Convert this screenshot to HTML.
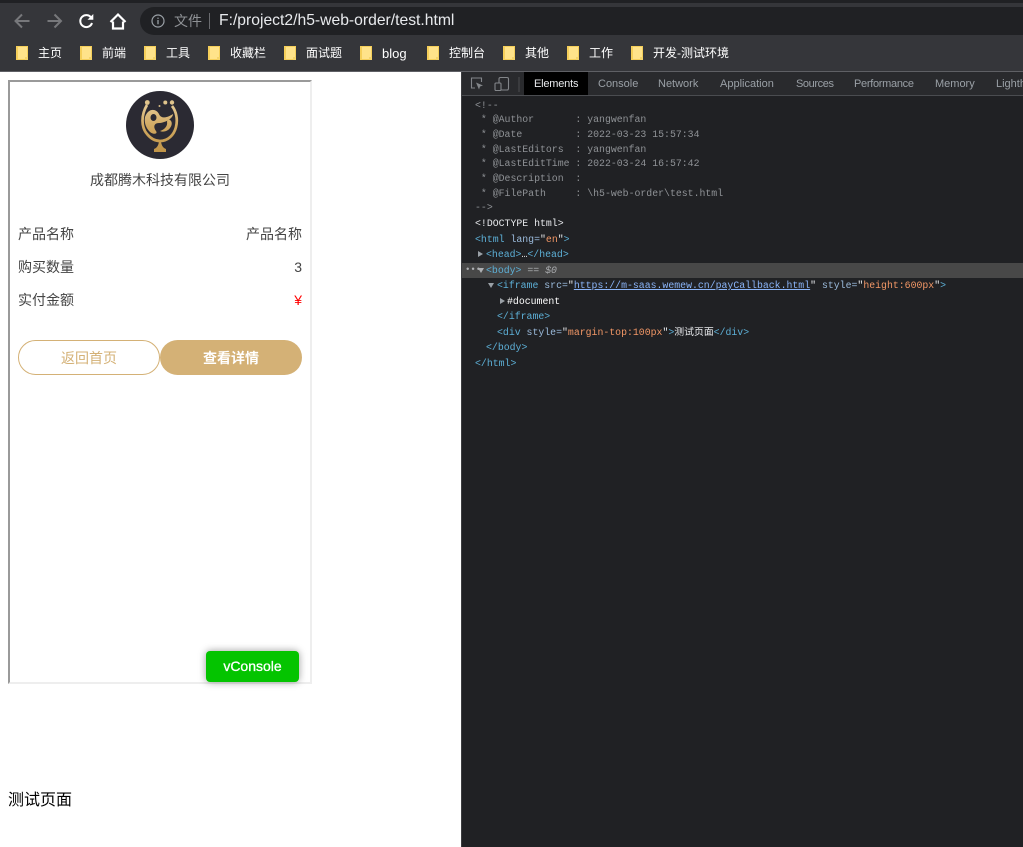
<!DOCTYPE html>
<html lang="zh"><head><meta charset="utf-8"><title>test</title>
<style>
html,body{margin:0;padding:0;width:1023px;height:847px;overflow:hidden;background:#fff;font-family:"Liberation Sans","Noto Sans CJK SC",sans-serif}
div,span,svg{position:absolute;white-space:pre}
span.c,b{position:static}
.bm{top:45px;color:#fff;font-size:12px;line-height:16px}
.f{top:46px;width:12px;height:14px;background:#ffe38a;border:1px solid #f5cf5a;border-left-width:2px;box-sizing:border-box}
.f:after{content:"";position:absolute;right:-1px;bottom:-1px;width:3px;height:3px;background:#f5d469}
.tab{top:73px;height:24px;line-height:23px;font-size:11px;color:#9aa0a6}
.l{left:0;height:15px;line-height:15px;font-family:"Liberation Mono","Noto Sans CJK SC",monospace;font-size:9.85px;color:#9aa0a6}
.g{color:#8f9296}
.t{color:#5db0d7}.a{color:#9bbbdc}.v{color:#f29766}.w{color:#e8eaed}
.row{font-size:14px;color:#444;line-height:18px;height:18px}
</style></head><body>
<!-- browser chrome -->
<div style="left:0;top:0;width:1023px;height:72px;background:#35363a"></div>
<div style="left:0;top:0;width:1023px;height:3px;background:#202124"></div>
<div style="left:140px;top:7px;width:883px;height:28px;background:#202124;border-radius:14px 0 0 14px"></div>
<div style="left:0;top:71px;width:1023px;height:1px;background:#5f6065"></div>
<svg style="left:12px;top:11px" width="116" height="20" viewBox="0 0 116 20" fill="none">
<path d="M17.500 10H4M10 3.500L3.500 10l6.500 6.500" stroke="#77787b" stroke-width="2"/>
<path d="M35.500 10h13.500M42.500 3.500l6.500 6.500-6.500 6.500" stroke="#77787b" stroke-width="2"/>
<path d="M79.300 6.800A6 6 0 1 0 80 12" stroke="#fff" stroke-width="2"/>
<path d="M75.500 8.700h5.800V3z" fill="#fff"/>
<path d="M101 10.500V17.500h10V10.500M98.500 11L106 3.500 113.500 11" stroke="#fff" stroke-width="2.200"/>
</svg>
<svg style="left:151px;top:14px" width="14" height="14" viewBox="0 0 14 14" fill="none"><circle cx="7" cy="7" r="6" stroke="#9aa0a6" stroke-width="1.200"/><path d="M7 6v4.200M7 3.600v1.300" stroke="#9aa0a6" stroke-width="1.300"/></svg>
<div style="left:174px;top:12px;font-size:14px;line-height:18px;color:#8f9296">文件</div>
<div style="left:209px;top:13px;width:1px;height:16px;background:#6a6b6f"></div>
<div style="left:219px;top:11px;font-size:15.700px;line-height:20px;color:#e8eaed">F:/project2/h5-web-order/test.html</div>
<!-- bookmarks -->
<div class="f" style="left:16px"></div><div class="bm" style="left:38px">主页</div>
<div class="f" style="left:80px"></div><div class="bm" style="left:102px">前端</div>
<div class="f" style="left:144px"></div><div class="bm" style="left:166px">工具</div>
<div class="f" style="left:208px"></div><div class="bm" style="left:230px">收藏栏</div>
<div class="f" style="left:284px"></div><div class="bm" style="left:306px">面试题</div>
<div class="f" style="left:360px"></div><div class="bm" style="left:382px;font-size:13px;top:46px">blog</div>
<div class="f" style="left:427px"></div><div class="bm" style="left:449px">控制台</div>
<div class="f" style="left:503px"></div><div class="bm" style="left:525px">其他</div>
<div class="f" style="left:567px"></div><div class="bm" style="left:589px">工作</div>
<div class="f" style="left:631px"></div><div class="bm" style="left:653px">开发-测试环境</div>
<!-- iframe -->
<div style="left:8px;top:80px;width:304px;height:604px;box-sizing:border-box;border:2px solid;border-color:#9a9a9a #eeeeee #eeeeee #9a9a9a;background:#fff"></div>
<svg style="left:126px;top:91px" width="68" height="68" viewBox="0 0 68 68" fill="none">
<defs><linearGradient id="gd" x1="0" y1="0" x2="0" y2="1"><stop offset="0" stop-color="#f0d9a6"/><stop offset="1" stop-color="#b8893f"/></linearGradient>
<linearGradient id="gu" gradientUnits="userSpaceOnUse" x1="0" y1="10" x2="0" y2="62"><stop offset="0" stop-color="#e8cf9c"/><stop offset=".5" stop-color="#d0a860"/><stop offset="1" stop-color="#c09448"/></linearGradient></defs>
<circle cx="34" cy="34" r="34" fill="#2b2a33"/>
<path d="M21 14C15 24 15 36 21 43C25 48 30 50 34 50C42 50 48 44 50 36C52 28 50 20 46 15" stroke="url(#gu)" stroke-width="2.700"/>
<path d="M19 26C22 17 30 17 33 23C35 28 41 27 47 23C47 28 38 32 33 32C28 32 27 36 30 40C32 43 28 44 24 41C20 37 18 32 19 26z" fill="url(#gu)"/>
<ellipse cx="27.500" cy="26.500" rx="3" ry="3.500" fill="#2b2a33"/>
<path d="M44 29C47 31 46 36 42 39C39 41 36 41 34 40C38 39 42 35 41 31C41 29 43 28 44 29z" fill="url(#gu)"/>
<path d="M33 49h2C35 54 37 57 40 58V61H28V58C31 57 33 54 33 49z" fill="url(#gu)"/>
<circle cx="21.300" cy="11.500" r="2.400" fill="#e0c48c"/><circle cx="39.300" cy="11.500" r="2" fill="#e0c48c"/><circle cx="46" cy="11.500" r="2.200" fill="#e0c48c"/><circle cx="33.500" cy="15" r="1" fill="#d8bc84"/>
</svg>
<div style="left:90px;top:171px;font-size:14px;line-height:18px;color:#444">成都腾木科技有限公司</div>
<div class="row" style="left:18px;top:225px">产品名称</div>
<div class="row" style="right:721px;top:225px">产品名称</div>
<div class="row" style="left:18px;top:258px">购买数量</div>
<div class="row" style="right:721px;top:258px">3</div>
<div class="row" style="left:18px;top:291px">实付金额</div>
<div class="row" style="right:721px;top:291px;color:#f00">¥</div>
<div style="left:18px;top:340px;width:142px;height:35px;box-sizing:border-box;border:1px solid #d4b176;border-radius:18px;text-align:center;line-height:35px;font-size:14px;color:#d4b176">返回首页</div>
<div style="left:160px;top:340px;width:142px;height:35px;background:#d4b176;border-radius:18px;text-align:center;line-height:37px;font-size:14px;font-weight:bold;color:#fff">查看详情</div>
<div style="left:206px;top:651px;width:93px;height:31px;background:#04c400;border-radius:4px;box-shadow:0 0 8px rgba(0,0,0,.4);text-align:center;line-height:31px;font-size:14px;color:#fff;-webkit-text-stroke:.3px #fff">vConsole</div>
<div style="left:8px;top:790px;font-size:16px;line-height:21px;color:#000">测试页面</div>
<!-- devtools -->
<div style="left:461px;top:72px;width:562px;height:775px;background:#202124;border-left:1px solid #3c3d40;box-sizing:border-box"></div>
<div style="left:462px;top:72px;width:561px;height:23px;background:#292a2d"></div>
<div style="left:462px;top:95px;width:561px;height:1px;background:#4a4c50"></div>
<svg style="left:470px;top:76px" width="50" height="17" viewBox="0 0 50 17" fill="none">
<path d="M5 12H1.500V2h10v4" stroke="#83868a" stroke-width="1.100"/><path d="M6 6.500l7 3-3 1-1 3z" fill="#83868a"/>
<rect x="29" y="1.500" width="9.500" height="12.500" rx="1.500" stroke="#83868a" stroke-width="1.100"/><rect x="25" y="7" width="6" height="7.500" rx="1" fill="#292a2d" stroke="#83868a" stroke-width="1.100"/>
<path d="M49 1v15" stroke="#4a4c50"/>
</svg>
<div style="left:524px;top:72px;width:64px;height:23px;background:#000"></div>
<div class="tab" style="left:534px;color:#e8eaed;letter-spacing:-.2px">Elements</div>
<div class="tab" style="left:598px">Console</div>
<div class="tab" style="left:658px">Network</div>
<div class="tab" style="left:720px">Application</div>
<div class="tab" style="left:796px;letter-spacing:-.4px">Sources</div>
<div class="tab" style="left:854px;letter-spacing:-.3px">Performance</div>
<div class="tab" style="left:935px">Memory</div>
<div class="tab" style="left:996px">Lighthouse</div>
<div style="left:462px;top:263px;width:561px;height:15px;background:#484848"></div>
<div class="l g" style="left:475px;top:98px">&lt;!--</div>
<div class="l g" style="left:475px;top:112px"> * @Author       : yangwenfan</div>
<div class="l g" style="left:475px;top:127px"> * @Date         : 2022-03-23 15:57:34</div>
<div class="l g" style="left:475px;top:142px"> * @LastEditors  : yangwenfan</div>
<div class="l g" style="left:475px;top:156px"> * @LastEditTime : 2022-03-24 16:57:42</div>
<div class="l g" style="left:475px;top:171px"> * @Description  :</div>
<div class="l g" style="left:475px;top:186px"> * @FilePath     : \h5-web-order\test.html</div>
<div class="l g" style="left:475px;top:200px">--&gt;</div>
<div class="l w" style="left:475px;top:216px">&lt;!DOCTYPE html&gt;</div>
<div class="l" style="left:475px;top:232px"><span class="c t">&lt;html</span><span class="c a"> lang=</span><span class="c w">"</span><span class="c v">en</span><span class="c w">"</span><span class="c t">&gt;</span></div>
<svg style="left:478px;top:251px" width="5" height="6"><path d="M0 0l5 3-5 3z" fill="#9aa0a6"/></svg>
<div class="l" style="left:486px;top:247px"><span class="c t">&lt;head&gt;</span><span class="c w">…</span><span class="c t">&lt;/head&gt;</span></div>
<div class="l" style="left:465px;top:263px;font-size:9px;color:#b0b2b5">•••</div>
<svg style="left:478px;top:268px" width="6" height="5"><path d="M0 0h6l-3 5z" fill="#aeb0b3"/></svg>
<div class="l" style="left:486px;top:263px"><span class="c t">&lt;body&gt;</span><span class="c" style="color:#a9abae"> == <i>$0</i></span></div>
<svg style="left:488px;top:283px" width="6" height="5"><path d="M0 0h6l-3 5z" fill="#9aa0a6"/></svg>
<div class="l" style="left:497px;top:278px"><span class="c t">&lt;iframe</span><span class="c a"> src=</span><span class="c w">"</span><span class="c" style="color:#8ab4f8;text-decoration:underline">https://m-saas.wemew.cn/payCallback.html</span><span class="c w">"</span><span class="c a"> style=</span><span class="c w">"</span><span class="c v">height:600px</span><span class="c w">"</span><span class="c t">&gt;</span></div>
<svg style="left:500px;top:298px" width="5" height="6"><path d="M0 0l5 3-5 3z" fill="#9aa0a6"/></svg>
<div class="l" style="left:507px;top:294px;color:#fff">#document</div>
<div class="l t" style="left:497px;top:309px">&lt;/iframe&gt;</div>
<div class="l" style="left:497px;top:325px"><span class="c t">&lt;div</span><span class="c a"> style=</span><span class="c w">"</span><span class="c v">margin-top:100px</span><span class="c w">"</span><span class="c t">&gt;</span><span class="c w">测试页面</span><span class="c t">&lt;/div&gt;</span></div>
<div class="l t" style="left:486px;top:340px">&lt;/body&gt;</div>
<div class="l t" style="left:475px;top:356px">&lt;/html&gt;</div>
</body></html>
